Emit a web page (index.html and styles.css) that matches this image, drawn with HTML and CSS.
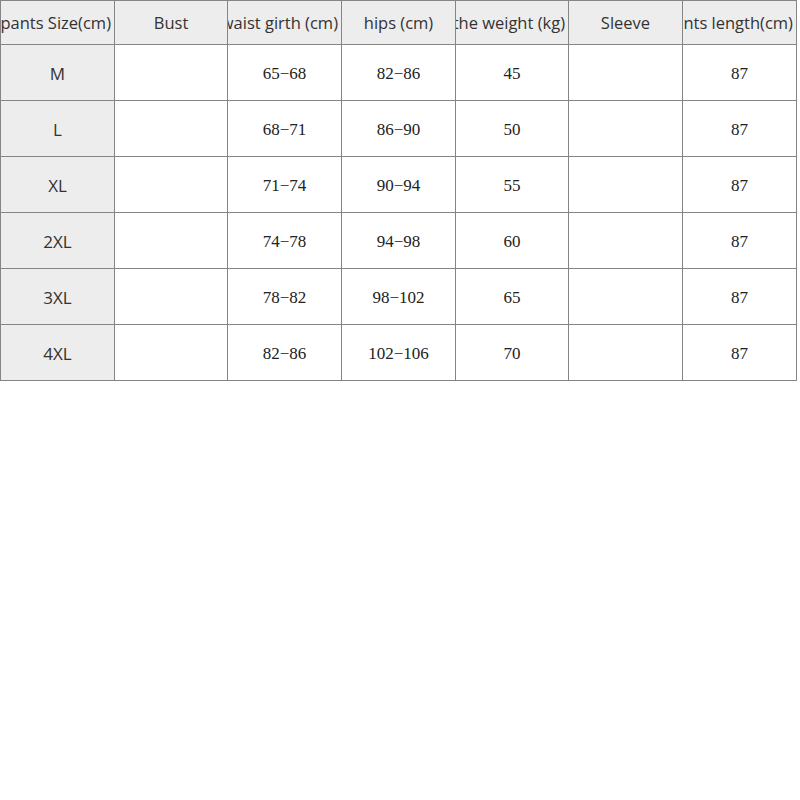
FILE: index.html
```html
<!DOCTYPE html>
<html>
<head>
<meta charset="utf-8">
<link rel="stylesheet" href="styles.css">
</head>
<body>
<div class="sheet">
  <div class="cell head clip"><span>the pants Size(cm)</span></div>
  <div class="cell head"><span>Bust</span></div>
  <div class="cell head clip"><span>waist girth (cm)</span></div>
  <div class="cell head"><span>hips (cm)</span></div>
  <div class="cell head clip"><span>the weight (kg)</span></div>
  <div class="cell head"><span>Sleeve</span></div>
  <div class="cell head clip"><span>pants length(cm)</span></div>

  <div class="cell size">M</div><div class="cell"></div><div class="cell num">65−68</div><div class="cell num">82−86</div><div class="cell num">45</div><div class="cell"></div><div class="cell num">87</div>
  <div class="cell size">L</div><div class="cell"></div><div class="cell num">68−71</div><div class="cell num">86−90</div><div class="cell num">50</div><div class="cell"></div><div class="cell num">87</div>
  <div class="cell size">XL</div><div class="cell"></div><div class="cell num">71−74</div><div class="cell num">90−94</div><div class="cell num">55</div><div class="cell"></div><div class="cell num">87</div>
  <div class="cell size">2XL</div><div class="cell"></div><div class="cell num">74−78</div><div class="cell num">94−98</div><div class="cell num">60</div><div class="cell"></div><div class="cell num">87</div>
  <div class="cell size">3XL</div><div class="cell"></div><div class="cell num">78−82</div><div class="cell num">98−102</div><div class="cell num">65</div><div class="cell"></div><div class="cell num">87</div>
  <div class="cell size">4XL</div><div class="cell"></div><div class="cell num">82−86</div><div class="cell num">102−106</div><div class="cell num">70</div><div class="cell"></div><div class="cell num">87</div>
</div>
</body>
</html>
```

FILE: styles.css
```css
html, body {
  margin: 0;
  padding: 0;
  background: #ffffff;
}

.sheet {
  display: grid;
  grid-template-columns: 114px 113px 114px 114px 113px 114px 114px;
  grid-template-rows: 44px repeat(6, 56px);
  width: max-content;
  border-top: 1px solid #858585;
  border-left: 1px solid #858585;
  font-family: "Open Sans", "Noto Sans", sans-serif;
  color: #333;
}

.cell {
  box-sizing: border-box;
  border-right: 1px solid #858585;
  border-bottom: 1px solid #858585;
  display: flex;
  align-items: center;
  justify-content: center;
  overflow: hidden;
  white-space: nowrap;
  font-size: 17px;
  padding-top: 2px;
}

.cell span {
  flex-shrink: 0;
}

.head {
  background: #ededed;
  font-size: 16.5px;
  padding-top: 0;
}

.clip {
  justify-content: flex-end;
  padding-right: 3px;
}

.size {
  background: #ededed;
}

.num {
  font-family: "Liberation Serif", serif;
  font-size: 17px;
  color: #222;
}
```
